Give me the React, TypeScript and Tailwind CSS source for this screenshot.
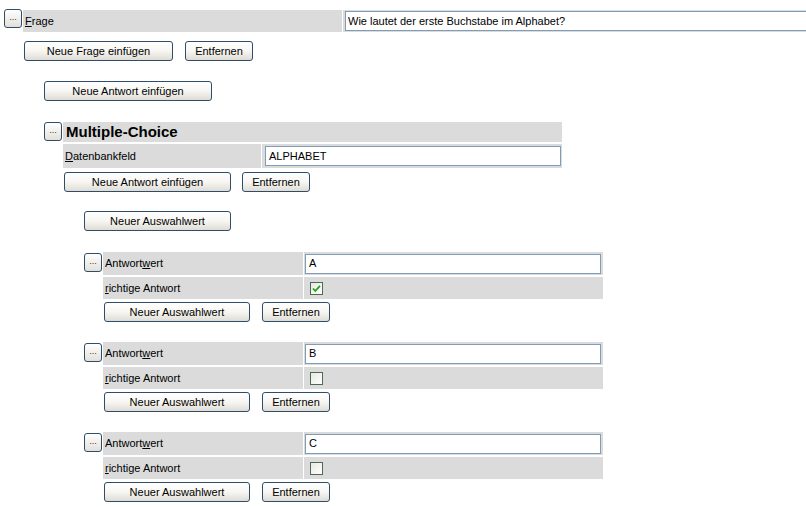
const font = "font-['Liberation_Sans',Arial,sans-serif]";

const Btn = ({ label, w }: { label: string; w: string }) => (
  <button
    className={`${w} h-[20px] shrink-0 rounded-[3px] border border-[#2f4c6b] bg-gradient-to-b from-white via-[#f7f6f2] to-[#dedcd4] text-[11px] leading-none text-black`}
  >
    {label}
  </button>
);

const Dots = () => (
  <button className="flex h-[19px] w-[18px] shrink-0 items-center justify-center rounded-[3px] border border-[#2f4c6b] bg-gradient-to-b from-white to-[#e2e0d8] pb-[3px] text-[9px] leading-none text-[#333]">
    ...
  </button>
);

const Check = ({ on }: { on: boolean }) => (
  <span className="flex h-[13px] w-[13px] items-center justify-center border border-[#4b6a55] bg-gradient-to-br from-[#e8e8e2] to-white">
    {on && (
      <svg width="9" height="9" viewBox="0 0 9 9">
        <path d="M1 4.5 L3.3 7 L8 1.8" fill="none" stroke="#21a121" strokeWidth="1.8" />
      </svg>
    )}
  </span>
);

const Antwort = ({ value, on, top }: { value: string; on: boolean; top: string }) => (
  <div className={top}>
    <div className="flex items-start pl-[84px]">
      <div className="mt-[1px]">
        <Dots />
      </div>
      <div className="ml-[1px] w-[500px]">
        <div className="flex h-[23px]">
          <div className="flex w-[200px] items-center bg-[#dbdbdb] pl-[2px]">
            Antwort<u>w</u>ert
          </div>
          <div className="ml-[1px] flex flex-1 items-center bg-[#dbdbdb] pl-[1px] pr-[2px]">
            <div className="flex h-[20px] w-full items-center border border-[#7f9db9] bg-white pl-[3px]">{value}</div>
          </div>
        </div>
        <div className="mt-[2px] flex h-[22px]">
          <div className="flex w-[200px] items-center bg-[#dbdbdb] pl-[2px]">
            <span>
              <u>r</u>ichtige Antwort
            </span>
          </div>
          <div className="ml-[1px] flex flex-1 items-center bg-[#dbdbdb] pl-[6px]">
            <Check on={on} />
          </div>
        </div>
      </div>
    </div>
    <div className="mt-[3px] flex gap-[12px] pl-[104px]">
      <Btn label="Neuer Auswahlwert" w="w-[146px]" />
      <Btn label="Entfernen" w="w-[68px]" />
    </div>
  </div>
);

export default function App() {
  return (
    <div className={`${font} h-[507px] w-[806px] overflow-hidden bg-white pt-[9px] text-[11px] text-black`}>
      {/* Frage */}
      <div className="flex items-start pl-[4px]">
        <Dots />
        <div className="ml-[1px] mt-[1px] flex h-[22px] w-[900px] shrink-0">
          <div className="flex w-[319px] items-center bg-[#dbdbdb] pl-[2px]">
            <span>
              <u>F</u>rage
            </span>
          </div>
          <div className="ml-[1px] flex flex-1 items-center bg-[#dbdbdb] pl-[2px]">
            <div className="flex h-[20px] w-full items-center border border-[#7f9db9] bg-white pl-[2px]">
              Wie lautet der erste Buchstabe im Alphabet?
            </div>
          </div>
        </div>
      </div>
      <div className="mt-[9px] flex gap-[12px] pl-[24px]">
        <Btn label="Neue Frage einfügen" w="w-[149px]" />
        <Btn label="Entfernen" w="w-[68px]" />
      </div>
      <div className="mt-[20px] pl-[44px]">
        <Btn label="Neue Antwort einfügen" w="w-[168px]" />
      </div>

      {/* Multiple-Choice */}
      <div className="mt-[21px] flex items-start pl-[44px]">
        <Dots />
        <div className="ml-[1px] w-[499px]">
          <div className="flex h-[20px] items-center bg-[#dbdbdb] pl-[3px] text-[15px] font-bold">Multiple-Choice</div>
          <div className="mt-[2px] flex h-[24px]">
            <div className="flex w-[198px] items-center bg-[#dbdbdb] pl-[2px]">
              <span>
                <u>D</u>atenbankfeld
              </span>
            </div>
            <div className="ml-[1px] flex flex-1 items-center bg-[#dbdbdb] pl-[3px] pr-[1px]">
              <div className="flex h-[20px] w-full items-center border border-[#7f9db9] bg-white pl-[3px]">ALPHABET</div>
            </div>
          </div>
        </div>
      </div>
      <div className="mt-[4px] flex gap-[11px] pl-[64px]">
        <Btn label="Neue Antwort einfügen" w="w-[167px]" />
        <Btn label="Entfernen" w="w-[68px]" />
      </div>
      <div className="mt-[19px] pl-[84px]">
        <Btn label="Neuer Auswahlwert" w="w-[147px]" />
      </div>

      <Antwort value="A" on={true} top="mt-[21px]" />
      <Antwort value="B" on={false} top="mt-[20px]" />
      <Antwort value="C" on={false} top="mt-[20px]" />
    </div>
  );
}
